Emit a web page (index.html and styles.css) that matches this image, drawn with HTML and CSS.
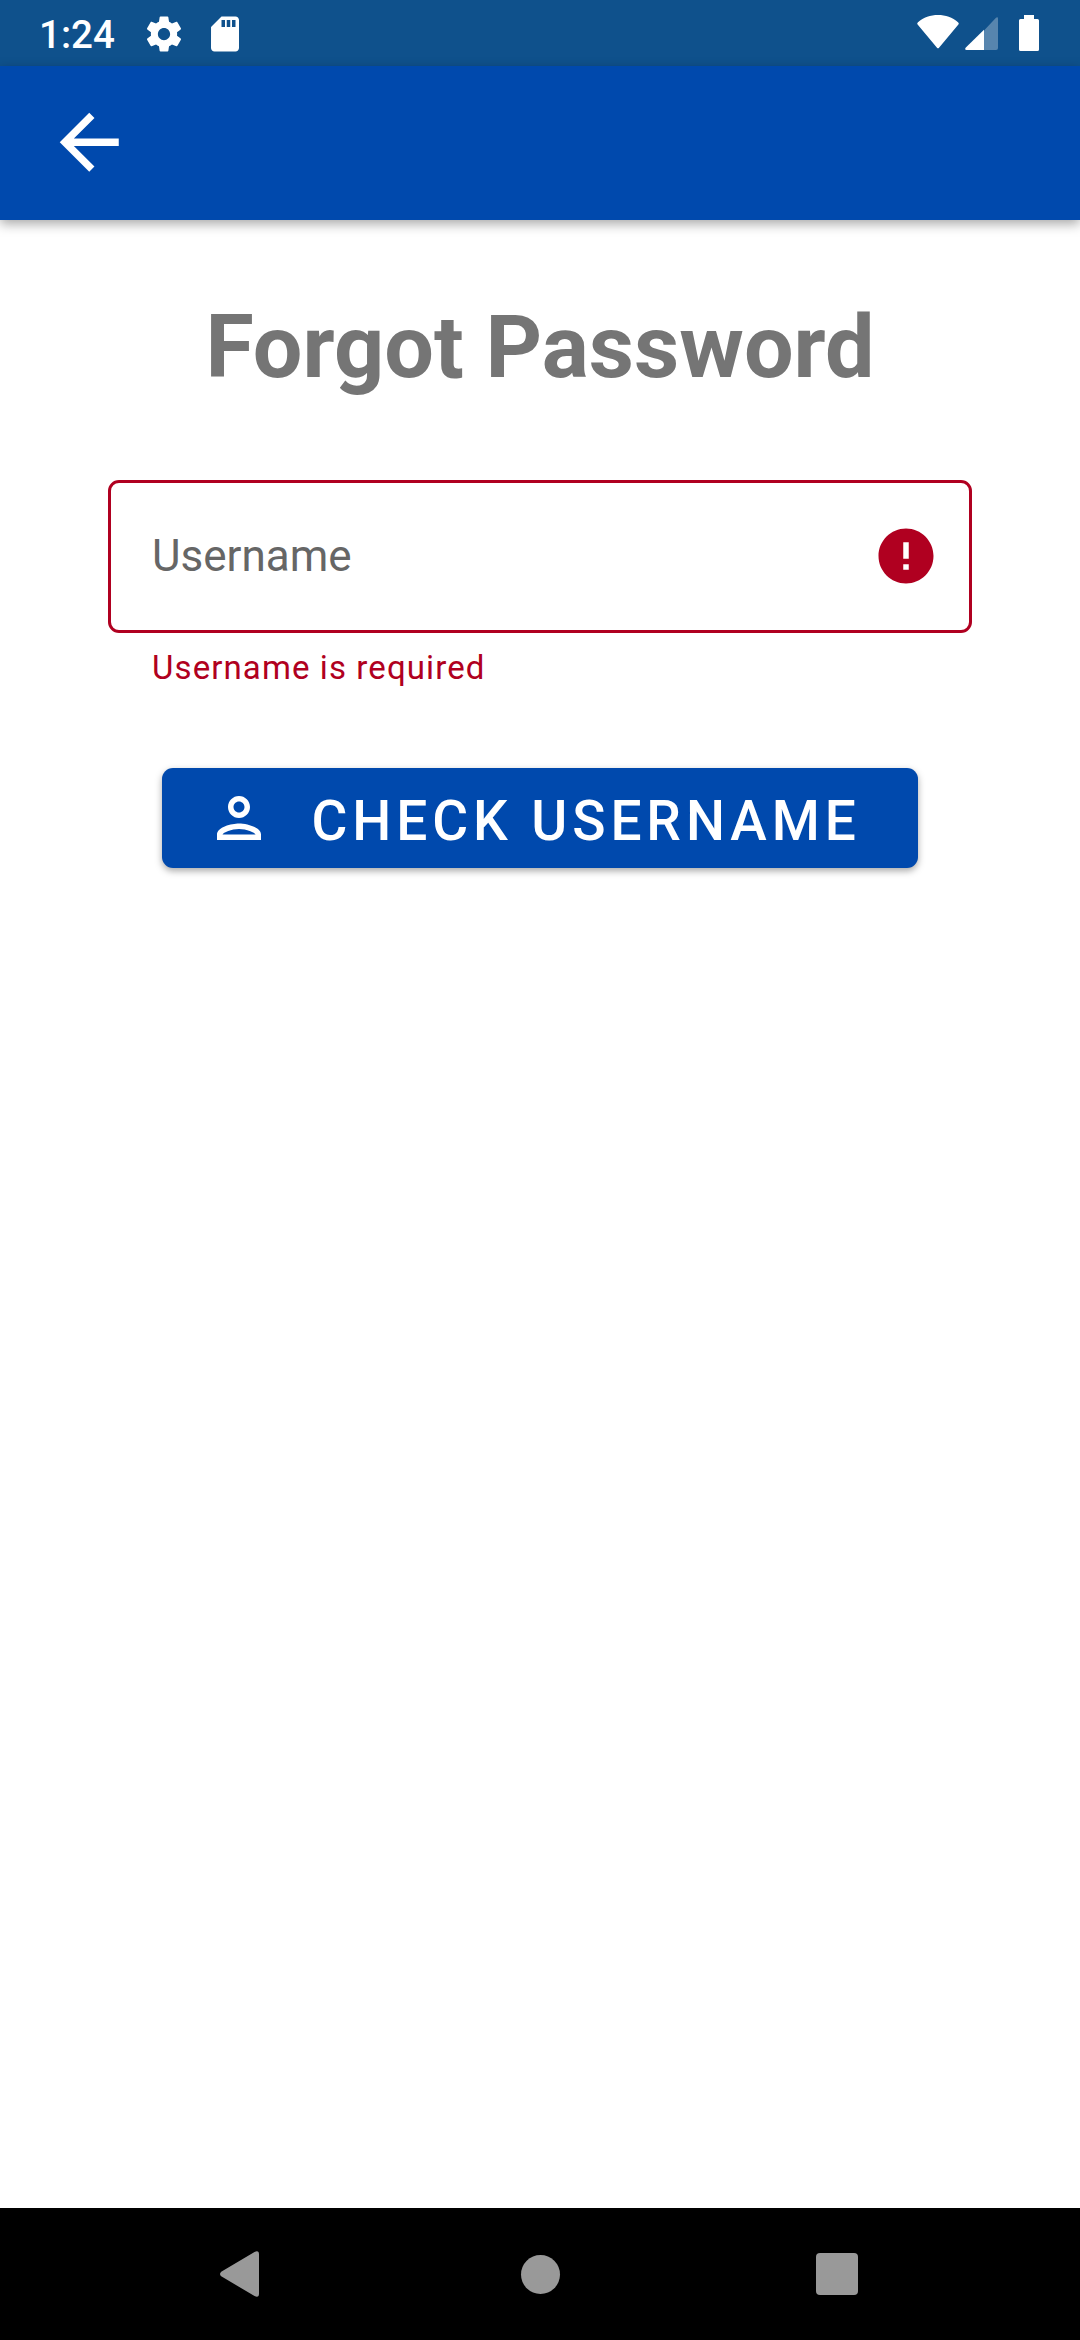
FILE: index.html
```html
<!DOCTYPE html>
<html lang="en">
<head>
<meta charset="utf-8">
<title>Forgot Password</title>
<link rel="stylesheet" href="styles.css">
</head>
<body>
<div class="screen">
  <div class="status-bar">
    <span class="clock">1:24</span>
    <svg class="icon-gear" viewBox="0 0 24 24"><path d="M19.43 12.98c.04-.32.07-.64.07-.98s-.03-.66-.07-.98l2.11-1.65c.19-.15.24-.42.12-.64l-2-3.46c-.12-.22-.39-.3-.61-.22l-2.49 1c-.52-.4-1.08-.73-1.69-.98l-.38-2.65C14.46 2.18 14.25 2 14 2h-4c-.25 0-.46.18-.49.42l-.38 2.65c-.61.25-1.17.59-1.69.98l-2.49-1c-.23-.09-.49 0-.61.22l-2 3.46c-.13.22-.07.49.12.64l2.11 1.65c-.04.32-.07.65-.07.98s.03.66.07.98l-2.11 1.65c-.19.15-.24.42-.12.64l2 3.46c.12.22.39.3.61.22l2.49-1c.52.4 1.08.73 1.69.98l.38 2.65c.03.24.24.42.49.42h4c.25 0 .46-.18.49-.42l.38-2.65c.61-.25 1.17-.59 1.69-.98l2.49 1c.23.09.49 0 .61-.22l2-3.46c.12-.22.07-.49-.12-.64l-2.11-1.65zM12 15.5c-1.93 0-3.5-1.57-3.5-3.5s1.570-3.500 3.500-3.500 3.500 1.570 3.500 3.500-1.570 3.500-3.500 3.500z"/></svg>
    <svg class="icon-sd" viewBox="0 0 24 24"><path d="M18 2h-8L4.020 8 4 20c0 1.100.9 2 2 2h12c1.100 0 2-.9 2-2V4c0-1.100-.9-2-2-2zm-6 6h-2V4h2v4zm3 0h-2V4h2v4zm3 0h-2V4h2v4z"/></svg>
    <div class="status-right">
      <svg class="icon-wifi" viewBox="0 0 42 34"><path d="M.6 9.600Q-.3 8.300 1 7.200C6.500 2.500 13.500.1 21 .1s14.500 2.400 20 7.100q1.300 1.100.4 2.400L22 32.800q-1 1.100-2 0z"/></svg>
      <svg class="icon-signal" viewBox="0 0 33 33"><path class="faint" d="M19 13.500 31 .8q2-1.300 2 1V31q0 2-2 2H19z"/><path d="M19 12.800V33H1.500Q-.6 32.700.6 30.800z"/></svg>
      <svg class="icon-battery" viewBox="0 0 20 36"><path d="M5 0h10v4h3.500Q20 4 20 5.500v29q0 1.500-1.500 1.500h-17Q0 36 0 34.500v-29Q0 4 1.500 4H5z"/></svg>
    </div>
  </div>
  <header class="app-bar">
    <svg class="icon-back" viewBox="0 0 24 24"><path d="M20 11H7.830l5.590-5.590L12 4l-8 8 8 8 1.410-1.410L7.830 13H20v-2z"/></svg>
  </header>
  <main class="content">
    <h1 class="title">Forgot Password</h1>
    <div class="field">
      <span class="field-label">Username</span>
      <svg class="icon-error" viewBox="0 0 24 24"><path d="M12 2C6.480 2 2 6.480 2 12s4.480 10 10 10 10-4.480 10-10S17.520 2 12 2zm1 15h-2v-2h2v2zm0-4h-2V7h2v6z"/></svg>
    </div>
    <p class="field-error">Username is required</p>
    <button class="button" type="button">
      <svg class="icon-person" viewBox="0 0 24 24"><path d="M12 6c1.100 0 2 .9 2 2s-.9 2-2 2-2-.9-2-2 .9-2 2-2m0 10c2.700 0 5.800 1.290 6 2H6c.23-.72 3.310-2 6-2m0-12C9.790 4 8 5.790 8 8s1.790 4 4 4 4-1.790 4-4-1.790-4-4-4zm0 10c-2.670 0-8 1.340-8 4v2h16v-2c0-2.660-5.330-4-8-4z"/></svg>
      <span>CHECK USERNAME</span>
    </button>
  </main>
  <nav class="nav-bar">
    <svg class="nav-back" viewBox="0 0 39 46"><path d="M1.200 20.700 34.500 1Q39-1.200 39 3.500v39q0 4.700-4.500 2.500L1.200 25.300q-2.400-2.300 0-4.600z"/></svg>
    <div class="nav-home"></div>
    <div class="nav-recent"></div>
  </nav>
</div>
</body>
</html>
```
FILE: styles.css
```css
* {
  box-sizing: border-box;
}

body {
  margin: 0;
  font-family: Roboto, "Liberation Sans", sans-serif;
  background: #fff;
}

svg {
  display: block;
  flex: none;
  fill: currentColor;
}

.screen {
  width: 1080px;
  height: 2340px;
  display: flex;
  flex-direction: column;
  overflow: hidden;
}

.status-bar {
  height: 66px;
  flex: none;
  display: flex;
  align-items: center;
  padding: 0 41px 0 39px;
  background: #0f518c;
  color: #fff;
}

.clock {
  width: 104px;
  font-size: 38.5px;
  font-weight: 500;
  line-height: 46px;
  padding-top: 4px;
}

.icon-gear {
  width: 42px;
  height: 42px;
  margin-top: 1px;
}

.icon-sd {
  width: 42px;
  height: 42px;
  margin: 1px 0 0 19px;
}

.status-right {
  margin-left: auto;
  display: flex;
  align-items: flex-start;
}

.icon-wifi {
  width: 42px;
  height: 34px;
}

.icon-signal {
  width: 33px;
  height: 33px;
  margin: 2px 21px 0 6px;
}

.faint {
  opacity: 0.3;
}

.icon-battery {
  width: 20px;
  height: 36px;
}

.app-bar {
  height: 154px;
  flex: none;
  display: flex;
  align-items: center;
  padding: 0 0 1px 44.5px;
  background: #0049ad;
  color: #fff;
  box-shadow: 0 4px 11px rgba(0, 0, 0, 0.34);
}

.icon-back {
  width: 88.5px;
  height: 88.5px;
}

.content {
  flex: 1;
  display: flex;
  flex-direction: column;
  padding: 75px 108px 0;
}

.title {
  margin: 0;
  font-size: 88px;
  font-weight: 700;
  line-height: 104px;
  text-align: center;
  color: #757575;
}

.field {
  height: 153px;
  margin-top: 81px;
  padding: 0 30px 1px 41px;
  display: flex;
  align-items: center;
  justify-content: space-between;
  border: 3px solid #b00020;
  border-radius: 11px;
}

.field-label {
  font-size: 44px;
  line-height: 52px;
  color: #666;
}

.icon-error {
  width: 66px;
  height: 66px;
  color: #b00020;
}

.field-error {
  margin: 15px 0 0 44px;
  font-size: 33px;
  line-height: 40px;
  letter-spacing: 1.1px;
  color: #b00020;
}

.button {
  align-self: center;
  width: 756px;
  height: 100px;
  margin-top: 80px;
  padding: 0 0 0 44px;
  display: flex;
  align-items: center;
  gap: 39.5px;
  border: 0;
  border-radius: 11px;
  background: #0049ad;
  color: #fff;
  font: 500 55px/64px Roboto, "Liberation Sans", sans-serif;
  letter-spacing: 4.91px;
  white-space: nowrap;
  box-shadow: 0 3px 7px rgba(0, 0, 0, 0.34);
}

.button span {
  padding-top: 6px;
}

.icon-person {
  width: 66px;
  height: 66px;
}

.nav-bar {
  height: 132px;
  flex: none;
  display: flex;
  align-items: center;
  justify-content: space-between;
  padding: 0 222px 0 220px;
  background: #000;
  color: #999;
}

.nav-back {
  width: 39px;
  height: 46px;
}

.nav-home {
  width: 39px;
  height: 39px;
  margin-left: 5px;
  border-radius: 50%;
  background: currentColor;
}

.nav-recent {
  width: 42px;
  height: 42px;
  border-radius: 4px;
  background: currentColor;
}
```
